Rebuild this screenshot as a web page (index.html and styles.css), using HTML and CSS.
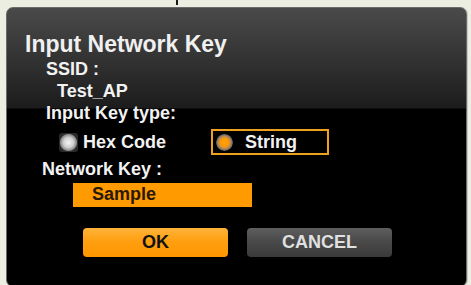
FILE: index.html
```html
<!DOCTYPE html>
<html lang="en">
<head>
    <meta charset="UTF-8">
    <title>Input Network Key</title>
    <link rel="stylesheet" href="styles.css">
</head>
<body>
    <div class="tick"></div>
    <div class="dialog">
        <h1 class="title">Input Network Key</h1>
        <div class="label">SSID :</div>
        <div class="label ssid">Test_AP</div>
        <div class="label">Input Key type:</div>
        <div class="radio-row">
            <div class="radio hex">
                <span class="dot off"></span>
                <span>Hex Code</span>
            </div>
            <div class="radio string selected">
                <span class="dot on"></span>
                <span>String</span>
            </div>
        </div>
        <div class="label key-label">Network Key :</div>
        <div class="key-field">Sample</div>
        <div class="buttons">
            <button class="btn ok">OK</button>
            <button class="btn cancel">CANCEL</button>
        </div>
    </div>
</body>
</html>
```

FILE: styles.css
```css
body {
    margin: 0;
    background: #eceee1;
    font-family: "Liberation Sans", Arial, sans-serif;
    font-weight: bold;
    color: #f2f2f2;
    height: 285px;
    overflow: hidden;
}
.tick {
    width: 2px;
    height: 5px;
    margin-left: 176px;
    background: #1a1a1a;
}
.dialog {
    margin: 2px 4px 0 6px;
    height: 280px;
    box-sizing: border-box;
    border: 1px solid #6a6a6a;
    border-radius: 7px;
    background: linear-gradient(180deg, #4a4a4a 0px, #2a2a2a 70px, #1c1c1c 100px, #000 101px, #000 100%);
    padding: 22px 0 0 18px;
    box-shadow: 1px 0 0 #c8c9c0;
}
.title {
    margin: 0;
    font-size: 23px;
    line-height: 28px;
    color: #f0f0f0;
}
.label {
    font-size: 18px;
    line-height: 22px;
    padding-left: 21px;
}
.label.ssid {
    padding-left: 32px;
}
.label.key-label {
    padding-left: 17px;
    margin-top: 3px;
}
.radio-row {
    display: flex;
    align-items: center;
    margin-top: 5px;
    height: 26px;
}
.radio {
    display: flex;
    align-items: center;
    font-size: 18px;
    line-height: 22px;
}
.radio.hex {
    margin-left: 34px;
    width: 152px;
}
.radio.string {
    box-sizing: border-box;
    width: 118px;
    height: 26px;
    border: 2px solid #f0a020;
    padding-left: 3px;
}
.dot {
    display: inline-block;
    border-radius: 3px;
}
.dot.off {
    width: 19px;
    height: 19px;
    margin-right: 5px;
    background: radial-gradient(circle at 50% 50%, #f4f4f4 0px, #cfcfcf 5px, #8a8a8a 8px, #2c2c2c 9px, #262626 100%);
}
.dot.on {
    width: 17px;
    height: 17px;
    margin-right: 12px;
    border-radius: 50%;
    background: radial-gradient(circle at 50% 50%, #ffa010 0px, #ff9a00 4px, #c08a50 6px, #6a6a6a 8px, #000 9px);
}
.key-field {
    margin: 3px 0 0 48px;
    width: 179px;
    height: 24px;
    background: #ff9b00;
    color: #2a1800;
    font-size: 18px;
    line-height: 22px;
    padding-left: 19px;
    box-sizing: border-box;
}
.buttons {
    display: flex;
    gap: 19px;
    margin: 21px 0 0 58px;
}
.btn {
    width: 145px;
    height: 29px;
    border: none;
    border-radius: 4px;
    font-family: "Liberation Sans", Arial, sans-serif;
    font-weight: bold;
    font-size: 18px;
    padding: 0;
}
.btn.ok {
    background: linear-gradient(180deg, #ffb43a 0%, #ff9f10 45%, #ff9600 100%);
    color: #111;
}
.btn.cancel {
    background: linear-gradient(180deg, #5e5e5e 0%, #4a4a4a 45%, #3a3a3a 100%);
    color: #e0e0e0;
}
```
